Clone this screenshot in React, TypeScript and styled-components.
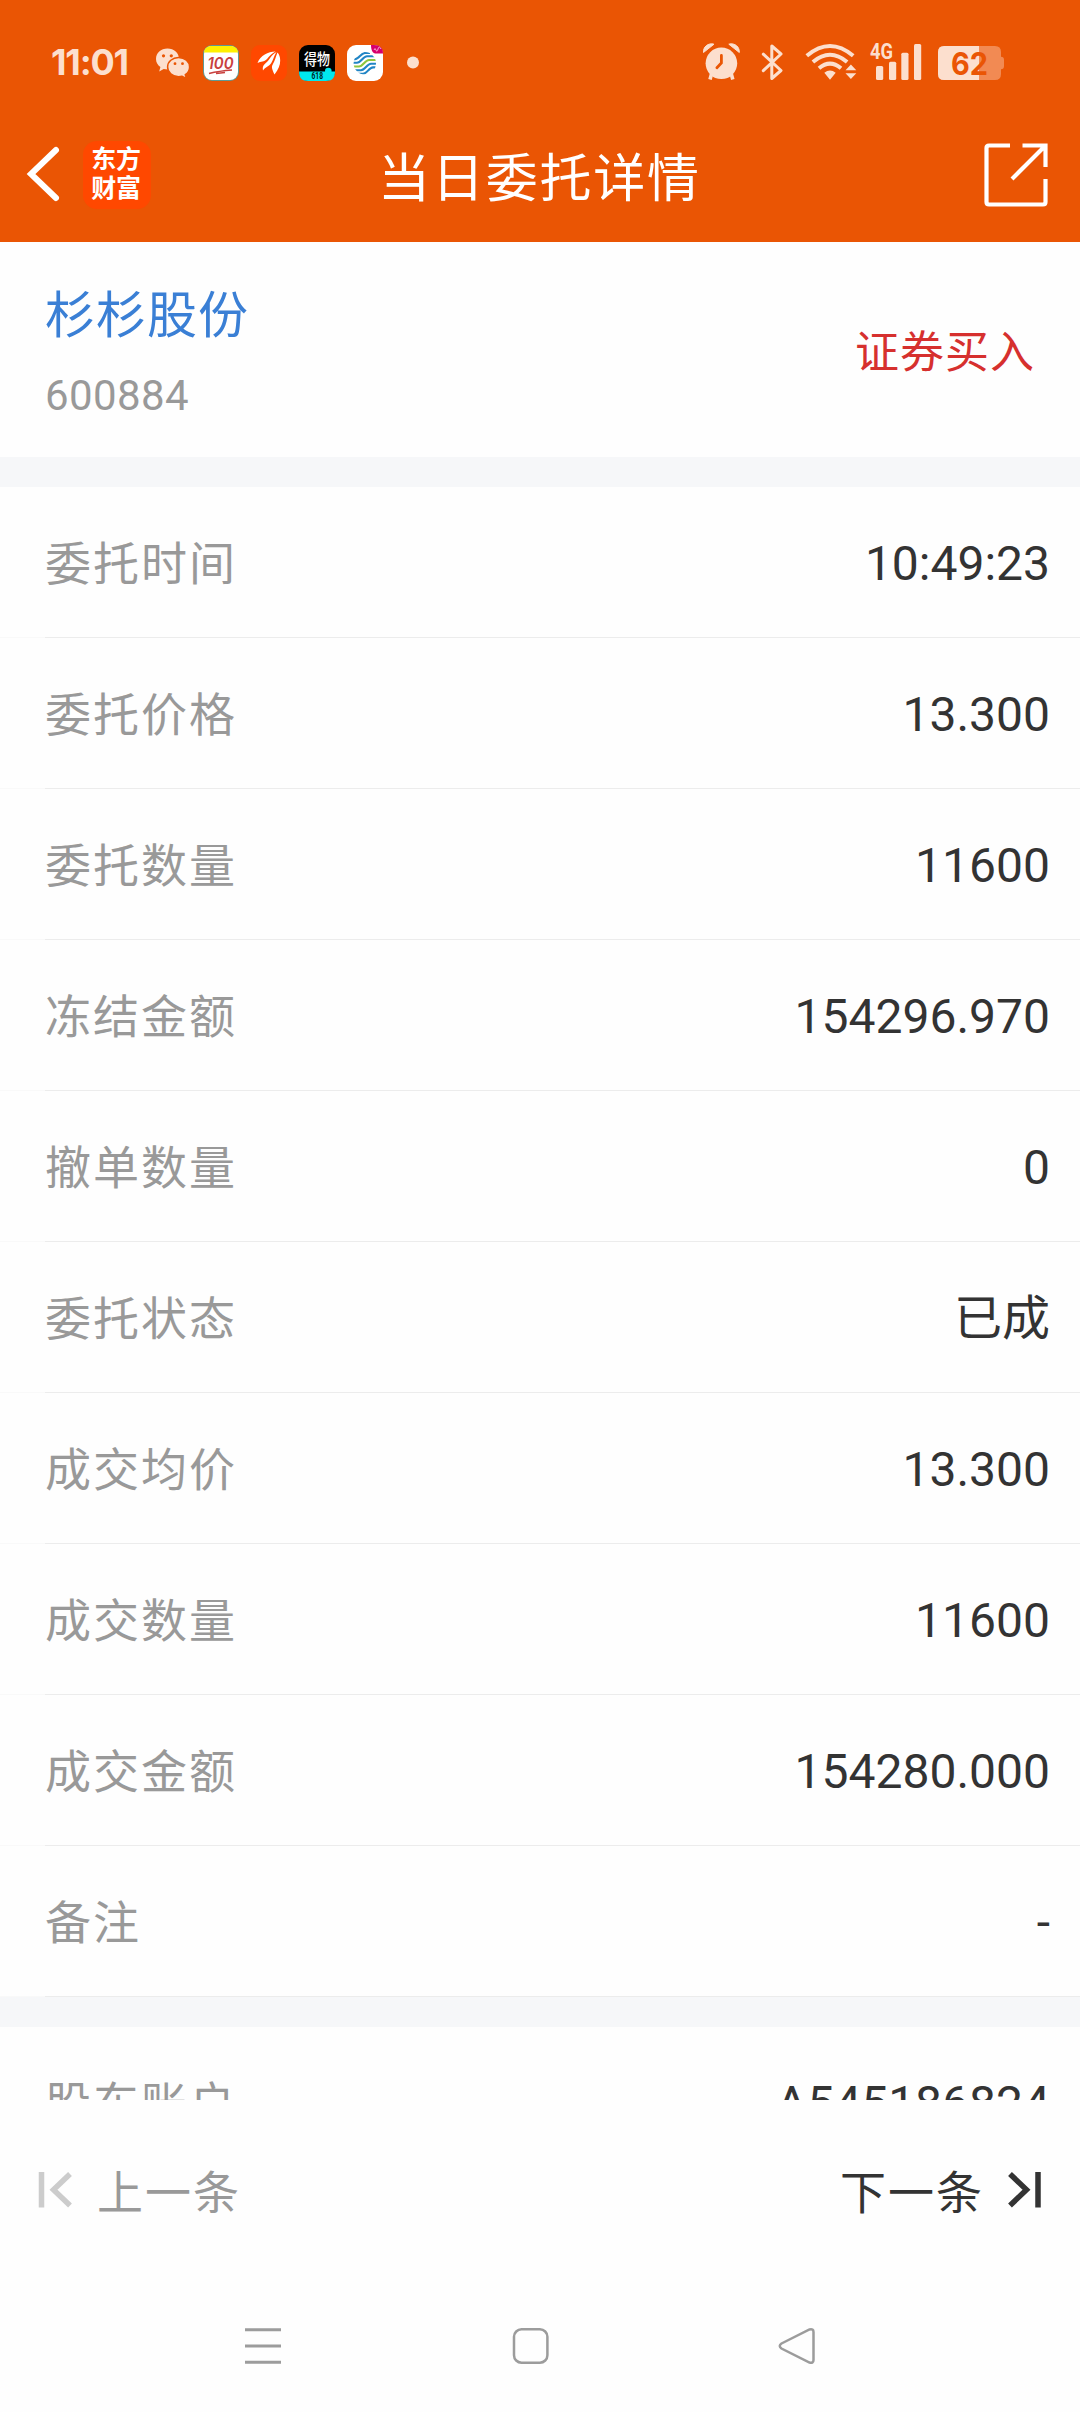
import React from 'react';
import styled, { createGlobalStyle } from 'styled-components';

const ORANGE = '#ea5504';
const PALE = '#fcdfce';
const FONT = `Roboto, "Noto Sans CJK SC", sans-serif`;

const GlobalStyle = createGlobalStyle`
  * { box-sizing: border-box; }
  html, body { margin: 0; padding: 0; background: #fefefe; }
  body { font-family: ${FONT}; overflow: hidden; }
`;

const Screen = styled.div`
  width: 1080px;
  height: 2412px;
  display: flex;
  flex-direction: column;
  background: #fefefe;
  overflow: hidden;
`;

const StatusBar = styled.div`
  height: 108px;
  padding: 18px 75px 0 51px;
  display: flex;
  align-items: center;
  justify-content: space-between;
  background: ${ORANGE};
`;

const StatusGroup = styled.div`
  display: flex;
  align-items: center;
`;

const Clock = styled.span`
  width: 104px;
  padding-bottom: 3px;
  font: 700 36px/40px Inter, sans-serif;
  letter-spacing: -1.2px;
  color: ${PALE};
  white-space: nowrap;
`;

const Glyph = styled.svg<{ $gap?: number }>`
  display: block;
  flex: none;
  overflow: visible;
  margin-left: ${(p) => p.$gap ?? 0}px;
`;

const TitleBar = styled.header`
  height: 134px;
  padding: 0 32px 0 26px;
  display: grid;
  grid-template-columns: 1fr auto 1fr;
  align-items: center;
  background: ${ORANGE};
  color: #fff;
`;

const TitleLeft = styled.div`
  display: flex;
  align-items: center;
  gap: 22px;
`;

const BrandBadge = styled.div`
  width: 68px;
  height: 68px;
  border-radius: 14px;
  background: #ff4800;
  display: flex;
  flex-direction: column;
  align-items: center;
  justify-content: center;
  padding: 0 2px 2px 0;
  font-size: 25px;
  font-weight: 700;
  line-height: 29px;
  letter-spacing: -0.3px;
`;

const Title = styled.h1`
  margin: 0;
  padding: 10px 0 0 5px;
  font-size: 52px;
  font-weight: 400;
  line-height: 60px;
  letter-spacing: 1.8px;
`;

const TitleRight = styled.div`
  display: flex;
  justify-content: flex-end;
`;

const StockCard = styled.section`
  height: 215px;
  padding: 7px 45px 0 45px;
  display: flex;
  align-items: center;
  justify-content: space-between;
`;

const StockInfo = styled.div`
  display: flex;
  flex-direction: column;
`;

const StockName = styled.div`
  font-size: 50px;
  line-height: 76px;
  letter-spacing: 1px;
  color: #3a7fd5;
`;

const StockCode = styled.div`
  margin-top: 9px;
  font-size: 42px;
  line-height: 66px;
  letter-spacing: 0.4px;
  color: #999;
`;

const TradeSide = styled.div`
  font-size: 44px;
  line-height: 60px;
  letter-spacing: 1px;
  color: #d6302e;
`;

const Divider = styled.div<{ $h: number }>`
  height: ${(p) => p.$h}px;
  flex: none;
  background: #f6f7f9;
`;

const Row = styled.div`
  height: 151px;
  flex: none;
  padding: 3px 30px 0 45px;
  display: flex;
  align-items: center;
  justify-content: space-between;
  line-height: 60px;
  background: linear-gradient(to right, #f9f9f9 45px, #ececec 45px) bottom / 100% 1px no-repeat;
`;

const Label = styled.span`
  font-size: 46px;
  letter-spacing: 2px;
  color: #999;
`;

const Value = styled.span`
  font-size: 48px;
  color: #333;
`;

const Clip = styled.div`
  height: 73px;
  flex: none;
  overflow: hidden;
`;

const Pager = styled.nav`
  height: 180px;
  padding: 0 37px;
  display: flex;
  align-items: center;
  justify-content: space-between;
`;

const PagerButton = styled.button<{ $disabled?: boolean }>`
  border: 0;
  padding: 0;
  background: none;
  display: flex;
  align-items: center;
  gap: ${(p) => (p.$disabled ? 24 : 23)}px;
  font: 400 46px/60px ${FONT};
  letter-spacing: 2px;
  color: ${(p) => (p.$disabled ? '#999' : '#333')};
`;

const PagerText = styled.span`
  padding-top: 5px;
`;

const SystemNav = styled.nav`
  height: 132px;
  padding: 0 264px 0 244px;
  display: flex;
  align-items: center;
  justify-content: space-between;
`;

const rows: [string, string][] = [
  ['委托时间', '10:49:23'],
  ['委托价格', '13.300'],
  ['委托数量', '11600'],
  ['冻结金额', '154296.970'],
  ['撤单数量', '0'],
  ['委托状态', '已成'],
  ['成交均价', '13.300'],
  ['成交数量', '11600'],
  ['成交金额', '154280.000'],
  ['备注', '-'],
];

const WeChat = () => (
  <Glyph width="36" height="36" viewBox="0 0 36 36">
    <path d="M12.500 3.500C5.900 3.500 1 8.100 1 14c0 3.400 1.700 6.200 4.400 8L4.200 26.500l4.500-2.500c1.300.300 2.600.500 4 .500C19 24.500 24 20 24 14S19 3.500 12.500 3.500z" fill={PALE} />
    <path d="M23.600 12.500c-6.200 0-11 4.200-11 9.500s4.800 9.700 11 9.700c1.200 0 2.400-.200 3.500-.500l4.500 2.500-1.300-4c2.600-1.700 4.300-4.500 4.300-7.700 0-5.300-4.800-9.500-11-9.500z" fill={PALE} stroke={ORANGE} strokeWidth="1.500" />
    <g fill={ORANGE}>
      <circle cx="8.500" cy="10.800" r="1.600" />
      <circle cx="16.300" cy="10.800" r="1.600" />
      <circle cx="20" cy="18.700" r="1.400" />
      <circle cx="27.500" cy="18.700" r="1.400" />
    </g>
  </Glyph>
);

const HundredApp = () => (
  <Glyph $gap={12} width="36" height="36" viewBox="0 0 36 36">
    <rect width="36" height="36" rx="9" fill="#5f9a94" />
    <rect x="1" y="1" width="34" height="34" rx="8" fill="#fff" />
    <path d="M1 7.500C1.300 3.500 4 1 9 1h18c5 0 7.700 2.500 8 6.500z" fill="#fff000" />
    <text x="4.500" y="24" textLength="26" lengthAdjust="spacingAndGlyphs" fontFamily="Inter, sans-serif" fontWeight="600" fontStyle="italic" fontSize="16" fill="#c8403e">100</text>
    <path d="M6 28.500Q16 26 29 25M13 28.500l9-1" stroke="#c8403e" strokeWidth="1.300" fill="none" />
  </Glyph>
);

const WingApp = () => (
  <Glyph $gap={12} width="36" height="36" viewBox="0 0 36 36">
    <rect width="36" height="36" rx="9" fill="#ff4800" />
    <g fill="#fff">
      <path d="M24.500 6.500C17 6.500 9.500 10.500 6.500 18c3.500-2 6.500-.500 9.500-4 2.500-3.300 5-5.500 8.500-7.500z" />
      <path d="M25.500 7c-4 2-5.700 5.300-8.200 8.500-3 3.300-6.300 4.500-5.300 10 2.500-3.500 5.800-3.800 8.300-7.500 2.200-3.700 2.700-7.500 5.200-11z" />
      <path d="M26.500 7.500c-2 4.500-2.300 8-4.800 12-1.700 2.800-.200 5.500 1.800 10 4-5 5.700-9.500 5.700-14 0-3.500-1-6-2.700-8z" />
    </g>
  </Glyph>
);

const DewuApp = () => (
  <Glyph $gap={12} width="36" height="36" viewBox="0 0 36 36">
    <rect width="36" height="36" rx="9" fill="#000" />
    <path d="M0 26.500h36c0 6.500-3 9.500-9 9.500H9c-6 0-9-3-9-9.500z" fill="#00e8ee" />
    <circle cx="29.300" cy="26" r="3.300" fill="#00e8ee" />
    <text x="5" y="20.300" textLength="26" lengthAdjust="spacingAndGlyphs" fontFamily="Noto Sans CJK SC, sans-serif" fontWeight="500" fontSize="15.500" fill="#fff">得物</text>
    <text x="12.500" y="34" textLength="11.500" lengthAdjust="spacingAndGlyphs" fontFamily="Roboto, sans-serif" fontWeight="700" fontSize="9" fill="#022">618</text>
  </Glyph>
);

const MobileApp = () => (
  <Glyph $gap={12} width="36" height="36" viewBox="0 0 36 36">
    <rect width="36" height="36" rx="9" fill="#fff" />
    <path d="M24 0h3c6 0 9 3 9 8.500h-7c-3 0-5-2.500-5-8.500z" fill="#d6006c" />
    <path d="M27 5q1-3 2 0t2-1 3 0" stroke="#f7a6cf" strokeWidth="1" fill="none" />
    <clipPath id="globe">
      <circle cx="17.800" cy="18.300" r="11.200" />
    </clipPath>
    <g fill="none" stroke="#2185c5" strokeWidth="2.100" clipPath="url(#globe)">
      <path d="M5 14.200h3c4 0 6-6.200 10-6.200h5" />
      <path d="M5 17.800h5c4 0 6-6.500 10-6.500h10" />
      <path d="M5 21.500h7c4 0 6-6.500 10-6.500h9" stroke="#8dc63f" />
      <path d="M5 25.200h9c4 0 6-6.500 10-6.500h7" />
      <path d="M8 28.800h8c4 0 6-6.400 10-6.400h5" />
    </g>
  </Glyph>
);

const MoreDot = () => (
  <Glyph $gap={24} width="12" height="12" viewBox="0 0 12 12">
    <circle cx="6" cy="5.500" r="6" fill={PALE} />
  </Glyph>
);

const Alarm = () => (
  <Glyph width="40" height="40" viewBox="0 0 40 40">
    <path d="M1.500 9.500C1 4 6 -.500 12 1.200zM37.300 9.500c.500-5.500-4.500-10-10.500-8.300z" fill={PALE} stroke={PALE} strokeLinejoin="round" />
    <circle cx="19.400" cy="20.300" r="17.200" fill={ORANGE} />
    <path d="M9.500 31L8 36.500M29.300 31l1.500 5.500" stroke={PALE} strokeWidth="3.600" />
    <circle cx="19.400" cy="20.300" r="15.800" fill={PALE} />
    <path d="M19.400 12.500v7.500l-4.500 4.800" fill="none" stroke={ORANGE} strokeWidth="2.800" strokeLinecap="round" />
  </Glyph>
);

const Bluetooth = () => (
  <Glyph $gap={18} width="26" height="40" viewBox="0 0 26 40">
    <path d="M3.300 11.200L21 27.500l-9.200 8V3L21 11 3.300 27.700" fill="none" stroke={PALE} strokeWidth="3" strokeLinejoin="round" strokeLinecap="round" />
  </Glyph>
);

const Wifi = () => (
  <Glyph $gap={18} width="54" height="40" viewBox="0 0 54 40">
    <g fill="none" stroke={PALE} strokeWidth="4">
      <path d="M2.800 12.800Q26-6.800 49.200 12.800" />
      <path d="M8.900 19Q26 4.600 43.100 19" />
      <path d="M15 25.200Q26 16 37 25.200" />
    </g>
    <path d="M20.300 29.800Q26 25 31.700 29.800L26 36.800zM41.500 27.300h10.800L46.900 21.500zM41.500 30.300h10.800L46.900 36z" fill={PALE} />
  </Glyph>
);

const Signal = () => (
  <Glyph $gap={11} width="54" height="40" viewBox="0 0 54 40">
    <g fill={PALE}>
      <rect x="7" y="23" width="7.200" height="14" rx="1.500" />
      <rect x="20" y="18.700" width="7.200" height="18.300" rx="1.500" />
      <rect x="32.300" y="9.700" width="7.200" height="27.300" rx="1.500" />
      <rect x="45" y="1" width="7.200" height="36" rx="1.500" />
      <text x="1" y="16" textLength="23" lengthAdjust="spacingAndGlyphs" fontFamily="Roboto, sans-serif" fontWeight="700" fontSize="22">4G</text>
    </g>
  </Glyph>
);

const Battery = () => (
  <Glyph $gap={15} width="67" height="40" viewBox="0 0 67 40">
    <path d="M6 3h51q6 0 6 6v4.700q3 0 3 3v6.600q0 3-3 3V31q0 6-6 6H6q-6 0-6-6V9q0-6 6-6z" fill="#f28a53" />
    <path d="M6 3h35v34H6q-6 0-6-6V9q0-6 6-6z" fill={PALE} />
    <text x="13" y="31.700" textLength="37" lengthAdjust="spacingAndGlyphs" fontFamily="Inter, sans-serif" fontWeight="700" fontSize="31" fill={ORANGE}>62</text>
  </Glyph>
);

const BackIcon = () => (
  <Glyph width="35" height="56" viewBox="0 0 35 56">
    <path d="M30 3L5 27l25 24" fill="none" stroke="#fff" strokeWidth="6" strokeLinecap="round" />
  </Glyph>
);

const ShareIcon = () => (
  <Glyph width="64" height="64" viewBox="0 0 64 64">
    <path d="M26 2.500H5Q2.500 2.500 2.500 5v54q0 2.500 2.500 2.500h54q2.500 0 2.500-2.500V36M38.500 2.500h23V24M61 3L28 36" fill="none" stroke="#fff" strokeWidth="4.200" />
  </Glyph>
);

const FirstIcon = () => (
  <Glyph width="36" height="38" viewBox="0 0 36 38">
    <path d="M4.500 1v35.500M33 3L16.500 18.800 33 34.500" fill="none" stroke="#ccc" strokeWidth="5.500" />
  </Glyph>
);

const LastIcon = () => (
  <Glyph width="36" height="38" viewBox="0 0 36 38">
    <path d="M31 1v35.500M3 3l16.500 15.800L3 34.500" fill="none" stroke="#333" strokeWidth="5.500" />
  </Glyph>
);

const navStroke = { fill: 'none', stroke: '#9c9c9c', strokeWidth: 3 };

export default function App() {
  return (
    <Screen>
      <GlobalStyle />
      <StatusBar>
        <StatusGroup>
          <Clock>11:01</Clock>
          <WeChat />
          <HundredApp />
          <WingApp />
          <DewuApp />
          <MobileApp />
          <MoreDot />
        </StatusGroup>
        <StatusGroup>
          <Alarm />
          <Bluetooth />
          <Wifi />
          <Signal />
          <Battery />
        </StatusGroup>
      </StatusBar>
      <TitleBar>
        <TitleLeft>
          <BackIcon />
          <BrandBadge>
            <span>东方</span>
            <span>财富</span>
          </BrandBadge>
        </TitleLeft>
        <Title>当日委托详情</Title>
        <TitleRight>
          <ShareIcon />
        </TitleRight>
      </TitleBar>
      <StockCard>
        <StockInfo>
          <StockName>杉杉股份</StockName>
          <StockCode>600884</StockCode>
        </StockInfo>
        <TradeSide>证券买入</TradeSide>
      </StockCard>
      <Divider $h={30} />
      {rows.map(([label, value]) => (
        <Row key={label}>
          <Label>{label}</Label>
          <Value>{value}</Value>
        </Row>
      ))}
      <Divider $h={30} />
      <Clip>
        <Row>
          <Label>股东账户</Label>
          <Value>A545186824</Value>
        </Row>
      </Clip>
      <Pager>
        <PagerButton $disabled>
          <FirstIcon />
          <PagerText>上一条</PagerText>
        </PagerButton>
        <PagerButton>
          <PagerText>下一条</PagerText>
          <LastIcon />
        </PagerButton>
      </Pager>
      <SystemNav>
        <Glyph width="38" height="38" viewBox="0 0 38 38">
          <path d="M1 2.700h36M1 19h36M1 35.300h36" {...navStroke} />
        </Glyph>
        <Glyph width="38" height="38" viewBox="0 0 38 38">
          <rect x="3" y="2.300" width="33.400" height="33.400" rx="7.500" {...navStroke} strokeWidth={2.500} />
        </Glyph>
        <Glyph width="38" height="38" viewBox="0 0 38 38">
          <path d="M3.500 16.500L31.500 2.500q4-1 4 2.500v28q0 3.500-4 2.500L3.500 21.500q-3.500-2.500 0-5z" {...navStroke} strokeWidth={2.500} />
        </Glyph>
      </SystemNav>
    </Screen>
  );
}
